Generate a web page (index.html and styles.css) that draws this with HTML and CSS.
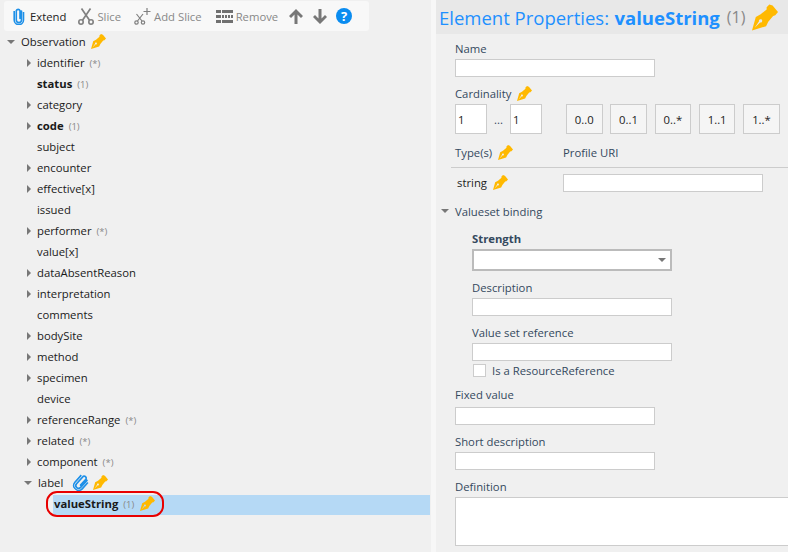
FILE: index.html
```html
<!DOCTYPE html>
<html lang="en">
<head>
  <meta charset="UTF-8" />
  <title>Element Properties</title>
  <link rel="stylesheet" href="styles.css">
</head>
<body>
  <svg class="defs" width="0" height="0">
    <symbol id="pen" viewBox="0 0 24 24">
      <path fill="#ffb900" fill-rule="evenodd" d="M0 24 L3.5 11.5 L8 9 L13.5 4.5 L13.5 2.5 L16 0 L19 1 L24 7 L21.5 10 L19.5 10.5 L15 16 L13 20 Z M2.5 21.5 L7.5 16.5 A1.5 1.5 0 1 0 6.5 15.5 Z"/>
    </symbol>
    <symbol id="clip" viewBox="0 0 12 18">
      <path fill="none" stroke="#1e90e8" stroke-width="1.6" stroke-linecap="round" d="M8.5 4 V13 A2.6 2.6 0 0 1 3.3 13 V3.6 A2 2 0 0 1 7 3.6 V11.5"/>
      <path fill="none" stroke="#1e90e8" stroke-width="1.6" d="M10.5 5 V13 A4.6 4.6 0 0 1 1.2 13 V4"/>
    </symbol>
    <symbol id="scissors" viewBox="0 0 16 17">
      <g fill="none" stroke="#808080">
        <circle cx="3" cy="14" r="2.2" stroke-width="1.6"/>
        <circle cx="13" cy="14" r="2.2" stroke-width="1.6"/>
        <path stroke-width="1.7" d="M4.5 12.2 L12.5 0.5 M11.5 12.2 L3.5 0.5"/>
      </g>
    </symbol>
  </svg>

  <div class="app">
    <div class="tree-pane">
      <div class="toolbar">
        <span class="tool tool-on"><svg class="tool-clip" width="12" height="18"><use href="#clip"/></svg>Extend</span>
        <span class="tool tool-slice"><svg width="16" height="17"><use href="#scissors"/></svg>Slice</span>
        <span class="tool tool-add">
          <svg width="17" height="17" viewBox="0 0 17 17">
            <g fill="none" stroke="#808080">
              <circle cx="2.5" cy="14.5" r="1.7" stroke-width="1.2"/>
              <circle cx="9" cy="14.5" r="1.7" stroke-width="1.2"/>
              <path stroke-width="1.2" d="M3.5 13 L9 6 M8 13 L2.5 6 M13 0 V7 M9.5 3.5 H16.5"/>
            </g>
          </svg>Add Slice</span>
        <span class="tool tool-remove">
          <svg width="17" height="13" viewBox="0 0 17 13">
            <path fill="#707070" d="M0 0 H5 V3 H0 Z M6 0 H17 V3 H6 Z M0 5 H5 V8 H0 Z M6 5 H8 V8 H6 Z M9 5 H11 V8 H9 Z M12 5 H14 V8 H12 Z M15 5 H17 V8 H15 Z M0 10 H5 V13 H0 Z M6 10 H17 V13 H6 Z"/>
          </svg>Remove</span>
        <svg class="arrow arrow-up" width="14" height="15" viewBox="0 0 14 15"><path fill="#777" d="M7 0 L14 7 L12 9 L8.5 5.5 V15 H5.5 V5.5 L2 9 L0 7 Z"/></svg>
        <svg class="arrow arrow-down" width="14" height="15" viewBox="0 0 14 15"><path fill="#777" d="M7 15 L14 8 L12 6 L8.5 9.5 V0 H5.5 V9.5 L2 6 L0 8 Z"/></svg>
        <span class="help">?</span>
      </div>

      <ul class="tree">
        <li class="row root"><i class="caret open"></i>Observation<svg class="pen" width="15" height="15"><use href="#pen"/></svg></li>
        <li class="row"><i class="caret"></i>identifier<small>(*)</small></li>
        <li class="row"><i class="caret none"></i><b>status</b><small>(1)</small></li>
        <li class="row"><i class="caret"></i>category</li>
        <li class="row"><i class="caret"></i><b>code</b><small>(1)</small></li>
        <li class="row"><i class="caret none"></i>subject</li>
        <li class="row"><i class="caret"></i>encounter</li>
        <li class="row"><i class="caret"></i>effective[x]</li>
        <li class="row"><i class="caret none"></i>issued</li>
        <li class="row"><i class="caret"></i>performer<small>(*)</small></li>
        <li class="row"><i class="caret none"></i>value[x]</li>
        <li class="row"><i class="caret"></i>dataAbsentReason</li>
        <li class="row"><i class="caret"></i>interpretation</li>
        <li class="row"><i class="caret none"></i>comments</li>
        <li class="row"><i class="caret"></i>bodySite</li>
        <li class="row"><i class="caret"></i>method</li>
        <li class="row"><i class="caret"></i>specimen</li>
        <li class="row"><i class="caret none"></i>device</li>
        <li class="row"><i class="caret"></i>referenceRange<small>(*)</small></li>
        <li class="row"><i class="caret"></i>related<small>(*)</small></li>
        <li class="row"><i class="caret"></i>component<small>(*)</small></li>
        <li class="row"><i class="caret open"></i>label<svg class="label-clip" width="19" height="19" viewBox="0 0 19 19"><g transform="rotate(42 9.5 9.5)"><use href="#clip" x="3" y="0" width="13" height="19"/></g></svg><svg class="pen pen-label" width="15" height="15"><use href="#pen"/></svg></li>
        <li class="row selected"><span class="ring"></span><b>valueString</b><small>(1)</small><svg class="pen" width="15" height="15"><use href="#pen"/></svg></li>
      </ul>
    </div>

    <div class="splitter"></div>

    <div class="props">
      <h1 class="props-title">Element Properties:<b>valueString</b><span>(1)</span><svg width="26" height="27"><use href="#pen"/></svg></h1>

      <div class="form">
        <label class="field-label">Name</label>
        <input class="text-input" type="text">

        <label class="field-label gap">Cardinality<svg class="pen" width="15" height="15"><use href="#pen"/></svg></label>
        <div class="card-row">
          <input class="card-input" type="text" value="1">
          <span class="dots">...</span>
          <input class="card-input" type="text" value="1">
          <div class="card-buttons">
            <button>0..0</button>
            <button>0..1</button>
            <button>0..*</button>
            <button>1..1</button>
            <button>1..*</button>
          </div>
        </div>
      </div>

      <div class="type-head">
        <span class="type-col">Type(s)<svg class="pen" width="15" height="15"><use href="#pen"/></svg></span>
        <span>Profile URI</span>
      </div>
      <div class="type-row">
        <span class="type-col type-name">string<svg class="pen" width="15" height="15"><use href="#pen"/></svg></span>
        <input class="text-input" type="text">
      </div>

      <div class="section-head"><i class="caret open"></i>Valueset binding</div>
      <div class="binding">
        <label class="field-label strong">Strength</label>
        <div class="select"><i class="caret open"></i></div>
        <label class="field-label gap">Description</label>
        <input class="text-input" type="text">
        <label class="field-label gap">Value set reference</label>
        <input class="text-input" type="text">
        <div class="check-row"><span class="check"></span>Is a ResourceReference</div>
      </div>

      <div class="form lower">
        <label class="field-label fixed-label">Fixed value</label>
        <input class="text-input" type="text">
        <label class="field-label gap">Short description</label>
        <input class="text-input" type="text">
        <label class="field-label gap">Definition</label>
        <div class="text-area"></div>
      </div>
    </div>
  </div>
</body>
</html>
```

FILE: styles.css
```css
html, body {
  margin: 0;
  height: 552px;
  overflow: hidden;
}

body {
  font-family: "Open Sans", "Noto Sans", sans-serif;
  font-size: 11.3px;
  color: #1a1a1a;
  background-color: #f0f0f0;
}

.defs {
  position: absolute;
}

.app {
  display: flex;
  height: 552px;
}

/* left side */
.tree-pane {
  width: 431px;
  flex: none;
}

.toolbar {
  display: flex;
  align-items: center;
  height: 30px;
  width: 365px;
  margin: 1px 0 0 4px;
  background-color: #f8f8f8;
  border-radius: 3px;
  color: #888;
}

.tool {
  display: flex;
  align-items: center;
}

.tool-on {
  color: #222;
  margin-left: 9px;
}

.tool-clip {
  margin-right: 5px;
}

.tool-slice {
  margin-left: 12px;
}

.tool-slice svg {
  margin-right: 3px;
}

.tool-add {
  margin-left: 13px;
}

.tool-add svg {
  margin-right: 3px;
}

.tool-remove {
  margin-left: 14px;
}

.tool-remove svg {
  margin-right: 3px;
}

.arrow-up {
  margin-left: 11px;
}

.arrow-down {
  margin-left: 10px;
}

.help {
  width: 16px;
  height: 16px;
  margin-left: 9px;
  border-radius: 50%;
  background-color: #0a8cf0;
  color: white;
  font-weight: 700;
  font-size: 13px;
  line-height: 16px;
  text-align: center;
}

.tree {
  list-style-type: none;
  margin: 0;
  padding: 0;
}

.row {
  display: flex;
  align-items: center;
  height: 21px;
  padding-left: 27px;
  white-space: pre;
  position: relative;
}

.row small {
  font-size: 9.5px;
  color: #888;
  margin-left: 5px;
  padding-top: 2px;
}

.row b {
  font-weight: 700;
}

.row.root {
  padding-left: 7px;
}

.row.root .caret {
  margin-right: 6px;
}

.row.root .pen {
  margin-left: 5px;
}

.row.selected {
  margin: 2px 1px 0 53px;
  height: 17px;
  padding-left: 1px;
  padding-bottom: 3px;
  background-color: #b5d9f5;
}

.ring {
  position: absolute;
  left: -7px;
  top: -4px;
  width: 114px;
  height: 22px;
  border: 2px solid #e80000;
  border-radius: 11px;
}

.row.selected .pen {
  margin-left: 6px;
}

.caret {
  flex: none;
  width: 0;
  height: 0;
  margin-right: 6px;
  border-style: solid;
  border-width: 4px 0 4px 4px;
  border-color: transparent transparent transparent #777;
}

.caret.none {
  border-color: transparent;
}

.caret.open {
  border-width: 4px 4px 0 4px;
  border-color: #777 transparent transparent transparent;
}

.row .caret.open {
  margin-left: -3px;
}

.row.root .caret.open {
  margin-left: 0;
}

.label-clip {
  margin-left: 9px;
}

.pen-label {
  margin-left: 2px;
}

/* right side */
.splitter {
  width: 5px;
  flex: none;
  background-color: #f7f7f7;
}

.props {
  flex: 1;
  min-width: 0;
  color: #34495e;
}

.props-title {
  display: flex;
  align-items: center;
  height: 34px;
  margin: 0;
  padding-left: 3px;
  background-color: #e8e8e8;
  color: #1e90ff;
  font-size: 18.5px;
  font-weight: 400;
  white-space: pre;
}

.props-title b {
  font-weight: 700;
  margin-left: 5.5px;
}

.props-title span {
  color: #888;
  font-size: 16px;
  margin-left: 7px;
}

.props-title svg {
  margin-left: 7px;
}

.form {
  padding: 7px 0 0 19px;
}

.field-label {
  display: flex;
  align-items: center;
  height: 14px;
  margin-bottom: 4px;
  white-space: pre;
}

.field-label.gap {
  margin-top: 9px;
}

.field-label .pen {
  margin-left: 6px;
}

.text-input {
  display: block;
  box-sizing: border-box;
  width: 200px;
  height: 18px;
  margin: 0;
  padding: 0 3px;
  background-color: white;
  border: 1px solid #ccc;
  border-radius: 0;
}

.card-row {
  display: flex;
  align-items: center;
}

.card-input {
  box-sizing: border-box;
  width: 32px;
  height: 30px;
  padding: 0 2px;
  background-color: white;
  border: 1px solid #ccc;
  font: inherit;
  color: #222;
}

.dots {
  width: 23px;
  text-align: center;
}

.card-buttons {
  display: flex;
  gap: 7.8px;
  margin-left: 24px;
}

button {
  box-sizing: border-box;
  width: 36.5px;
  height: 30px;
  padding: 0;
  background-color: #f5f5f5;
  border: 1px solid #ccc;
  font: inherit;
  color: #222;
}

.type-head {
  display: flex;
  align-items: center;
  height: 21px;
  margin: 8px 0 0 15px;
  padding: 0 0 4px 4px;
  border-bottom: 1px solid #ccc;
}

.type-col {
  display: flex;
  align-items: center;
  width: 108px;
  white-space: pre;
}

.type-col .pen {
  margin-left: 6px;
}

.type-row {
  display: flex;
  align-items: center;
  height: 18px;
  margin-top: 6px;
  padding-left: 21px;
}

.type-name {
  width: 106px;
  padding: 0 1px 2px 0;
  box-sizing: border-box;
  color: #222;
}

.section-head {
  display: flex;
  align-items: center;
  height: 14px;
  margin-top: 12px;
  padding: 0 0 2px 5px;
}

.binding {
  padding: 11px 0 0 36px;
}

.field-label.strong {
  font-weight: 700;
}

.select {
  display: flex;
  align-items: center;
  justify-content: flex-end;
  box-sizing: border-box;
  width: 200px;
  height: 22px;
  background-color: white;
  border: 2px solid #bbb;
}

.select .caret {
  margin-right: 4px;
}

.check-row {
  display: flex;
  align-items: center;
  height: 13px;
  margin-top: 3px;
  padding: 0 0 1px 1px;
  white-space: pre;
}

.check {
  box-sizing: border-box;
  width: 13px;
  height: 13px;
  margin-right: 6px;
  background-color: white;
  border: 1px solid #ccc;
}

.form.lower {
  padding-top: 9px;
}

.field-label.fixed-label {
  margin-bottom: 6px;
}

.text-area {
  box-sizing: border-box;
  height: 49px;
  background-color: white;
  border: 1px solid #ccc;
  border-right: none;
}
```
